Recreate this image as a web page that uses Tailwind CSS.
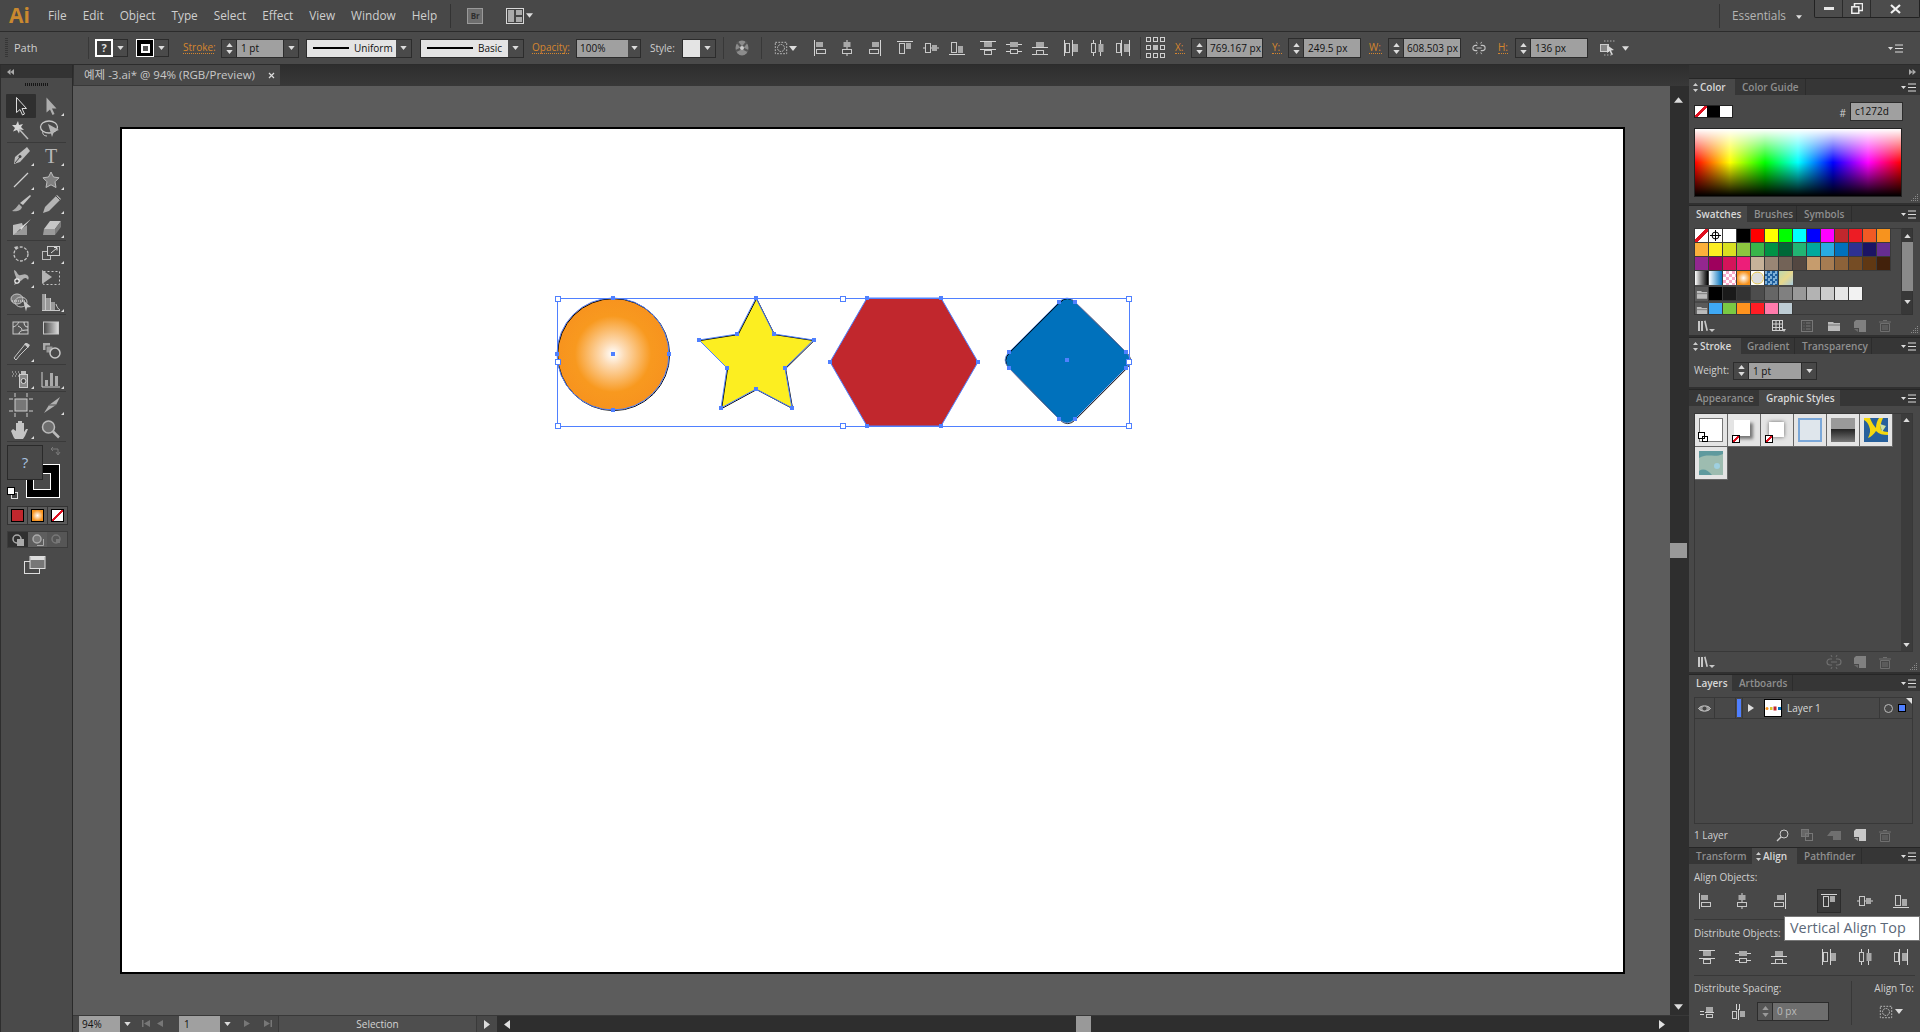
<!DOCTYPE html>
<html lang="ko">
<head>
<meta charset="UTF-8">
<title>Adobe Illustrator</title>
<script src="https://cdn.jsdelivr.net/npm/@tailwindcss/browser@4"></script>
</head>
<body class="w-[1920px] h-[1032px] overflow-hidden bg-[#2e2e2e] font-['Open_Sans','Noto_Sans_CJK_KR',sans-serif] text-[10px] text-[#d0d0d0]">

<!-- shared icons -->
<svg class="hidden">
  <symbol id="dd" viewBox="0 0 8 5"><path d="M0 0h8L4 5z" fill="#dcdcdc"/></symbol>
  <symbol id="up" viewBox="0 0 8 5"><path d="M0 5h8L4 0z" fill="#dcdcdc"/></symbol>
  <symbol id="menu" viewBox="0 0 15 9"><path d="M0 3h5L2.500 6z" fill="#ddd"/><path d="M7 1h8M7 4.500h8M7 8h8" stroke="#ddd"/></symbol>
  <symbol id="grip" viewBox="0 0 8 8"><path d="M7 1h1v1H7zM5 3h1v1H5zM7 3h1v1H7zM3 5h1v1H3zM5 5h1v1H5zM7 5h1v1H7zM1 7h1v1H1zM3 7h1v1H3zM5 7h1v1H5zM7 7h1v1H7z" fill="#8a8a8a"/></symbol>
  <symbol id="a-l" viewBox="0 0 16 16"><path d="M1.500 0v16" stroke="#d4d4d4"/><rect x="3" y="2" width="7" height="5" fill="#a8a8a8"/><rect x="3.500" y="9.500" width="9" height="4" fill="none" stroke="#c8c8c8"/></symbol>
  <symbol id="a-hc" viewBox="0 0 16 16"><path d="M8 0v16" stroke="#d4d4d4"/><rect x="4.500" y="2" width="7" height="5" fill="#a8a8a8"/><rect x="3.500" y="9.500" width="9" height="4" fill="#484848" stroke="#c8c8c8"/></symbol>
  <symbol id="a-r" viewBox="0 0 16 16"><path d="M14.500 0v16" stroke="#d4d4d4"/><rect x="6" y="2" width="7" height="5" fill="#a8a8a8"/><rect x="3.500" y="9.500" width="9" height="4" fill="none" stroke="#c8c8c8"/></symbol>
  <symbol id="a-t" viewBox="0 0 16 16"><path d="M0 1.500h16" stroke="#d4d4d4"/><rect x="2.500" y="3.500" width="5" height="10" fill="none" stroke="#c8c8c8"/><rect x="9" y="3" width="5" height="6" fill="#a8a8a8"/></symbol>
  <symbol id="a-vc" viewBox="0 0 16 16"><path d="M0 8h16" stroke="#d4d4d4"/><rect x="2.500" y="3.500" width="5" height="9" fill="#484848" stroke="#c8c8c8"/><rect x="9" y="5" width="5" height="6" fill="#a8a8a8"/></symbol>
  <symbol id="a-b" viewBox="0 0 16 16"><path d="M0 14.500h16" stroke="#d4d4d4"/><rect x="2.500" y="2.500" width="5" height="10" fill="none" stroke="#c8c8c8"/><rect x="9" y="6" width="5" height="7" fill="#a8a8a8"/></symbol>
  <symbol id="d-t" viewBox="0 0 16 16"><path d="M0 1.500h16M0 9.500h16" stroke="#d4d4d4"/><rect x="4" y="2" width="8" height="5" fill="#a8a8a8"/><rect x="4.500" y="10.500" width="7" height="4" fill="none" stroke="#c8c8c8"/></symbol>
  <symbol id="d-vc" viewBox="0 0 16 16"><path d="M0 4.500h16M0 11.500h16" stroke="#d4d4d4"/><rect x="4" y="2" width="8" height="5" fill="#a8a8a8"/><rect x="4.500" y="9.500" width="7" height="4" fill="#484848" stroke="#c8c8c8"/></symbol>
  <symbol id="d-b" viewBox="0 0 16 16"><path d="M0 7.500h16M0 14.500h16" stroke="#d4d4d4"/><rect x="4" y="2" width="8" height="5" fill="#a8a8a8"/><rect x="4.500" y="10.500" width="7" height="4" fill="none" stroke="#c8c8c8"/></symbol>
  <symbol id="d-l" viewBox="0 0 16 16"><path d="M1.500 0v16M9.500 0v16" stroke="#d4d4d4"/><rect x="2.500" y="3.500" width="4" height="9" fill="none" stroke="#c8c8c8"/><rect x="10" y="4" width="5" height="8" fill="#a8a8a8"/></symbol>
  <symbol id="d-hc" viewBox="0 0 16 16"><path d="M4.500 0v16M11.500 0v16" stroke="#d4d4d4"/><rect x="2.500" y="3.500" width="4" height="9" fill="#484848" stroke="#c8c8c8"/><rect x="9.500" y="4" width="5" height="8" fill="#a8a8a8"/></symbol>
  <symbol id="d-r" viewBox="0 0 16 16"><path d="M6.500 0v16M14.500 0v16" stroke="#d4d4d4"/><rect x="1.500" y="3.500" width="4" height="9" fill="none" stroke="#c8c8c8"/><rect x="9" y="4" width="5" height="8" fill="#a8a8a8"/></symbol>
  <symbol id="s-v" viewBox="0 0 16 16"><path d="M1 7.500h4M1 10.500h4" stroke="#d4d4d4"/><rect x="7" y="3" width="7" height="5" fill="#a8a8a8"/><path d="M6 8.500h9" stroke="#d4d4d4"/><rect x="7.500" y="10.500" width="6" height="3" fill="none" stroke="#c8c8c8"/></symbol>
  <symbol id="s-h" viewBox="0 0 16 16"><path d="M6.500 0v6M9.500 0v6" stroke="#d4d4d4"/><rect x="2.500" y="7.500" width="4" height="7" fill="none" stroke="#c8c8c8"/><path d="M8.500 5v11" stroke="#d4d4d4"/><rect x="10" y="7" width="5" height="6" fill="#a8a8a8"/></symbol>
  <symbol id="sel" viewBox="0 0 16 16"><rect x="1.500" y="1.500" width="13" height="13" fill="none" stroke="#c8c8c8" stroke-dasharray="2 1.500"/><circle cx="8" cy="8" r="4" fill="none" stroke="#c8c8c8" stroke-dasharray="2 1"/></symbol>
  <symbol id="lib" viewBox="0 0 18 12"><path d="M1 1h2v10H1zM4 1h2v10H4z" fill="#c8c8c8"/><path d="M7 1l1.600-.4L11 10.600l-1.600.4z" fill="#c8c8c8"/><path d="M12 9h6l-3 3z" fill="#c8c8c8"/></symbol>
  <symbol id="list" viewBox="0 0 12 12"><rect x=".5" y=".5" width="11" height="11" fill="none" stroke="#777"/><path d="M2.500 3h1M5 3h4.500M2.500 6h1M5 6h4.500M2.500 9h1M5 9h4.500" stroke="#777"/></symbol>
  <symbol id="folder" viewBox="0 0 14 12"><path d="M1 2h5l1 1h6v8H1z" fill="#bbb"/><path d="M1 5h12" stroke="#777"/></symbol>
  <symbol id="new" viewBox="0 0 12 12"><path d="M2 0h10v12H5V8H0V2z" fill="currentColor"/><path d="M0 9h4v3z" fill="currentColor" opacity=".6"/></symbol>
  <symbol id="trash" viewBox="0 0 12 13"><path d="M4 1.500h4M0 3h12M1.500 4.500h9V12.500h-9zM4 6v5M6 6v5M8 6v5" fill="none" stroke="#6f6f6f"/></symbol>
  <symbol id="link" viewBox="0 0 16 14"><path d="M6 4H4a3 3 0 0 0 0 6h2M10 4h2a3 3 0 0 1 0 6h-2M5 7h6" fill="none" stroke="currentColor" stroke-width="1.200"/><path d="M5 0l1 2M11 0l-1 2M5 14l1-2M11 14l-1-2" stroke="currentColor"/></symbol>
</svg>

<!-- menu bar -->
<div class="flex items-center h-8 bg-[#484848] border-b border-[#2c2c2c] text-[11.8px] leading-none text-[#cfcfcf]">
  <span class="w-[48px] pl-[9px] text-[21px] font-bold text-[#c9892f]">Ai</span>
  <nav class="flex gap-[16px]">
    <span>File</span><span>Edit</span><span>Object</span><span>Type</span><span>Select</span><span>Effect</span><span>View</span><span>Window</span><span>Help</span>
  </nav>
  <div class="ml-[13px] w-px h-[24px] bg-[#333]"></div>
  <div class="ml-[16px] w-[16px] h-[16px] flex items-center justify-center bg-[#6e6e6e] border border-[#9a9a9a] text-[8px] font-bold text-[#2e2e2e]">Br</div>
  <svg class="ml-[23px]" width="18" height="16" viewBox="0 0 18 16"><rect x=".5" y=".5" width="17" height="15" fill="#444" stroke="#d8d8d8"/><rect x="2" y="2" width="6" height="12" fill="#aaa"/><rect x="10" y="2" width="6" height="5" fill="#aaa"/><rect x="10" y="9" width="6" height="5" fill="#aaa"/></svg>
  <svg class="ml-[2px]" width="7" height="5"><use href="#dd"/></svg>
  <div class="ml-auto w-px h-[24px] bg-[#333]"></div>
  <span class="ml-[12px] text-[#b5b5b5]">Essentials</span>
  <svg class="ml-[10px] mt-[3px]" width="6" height="4"><use href="#dd"/></svg>
  <div class="ml-[12px] self-start flex h-[18px] w-[106px] bg-[#4c4c4c] border-x border-b border-[#222] rounded-b-[2px]">
    <div class="w-[28px] border-r border-[#2b2b2b] flex items-center justify-center"><div class="w-[10px] h-[3px] bg-[#e8e8e8]"></div></div>
    <div class="w-[28px] border-r border-[#2b2b2b] flex items-center justify-center"><svg width="12" height="11"><rect x="3.500" y=".5" width="8" height="7" fill="none" stroke="#eee" stroke-width="1.500"/><rect x=".8" y="3.800" width="7" height="6.500" fill="#4c4c4c" stroke="#eee" stroke-width="1.500"/></svg></div>
    <div class="flex-1 flex items-center justify-center"><svg width="11" height="10"><path d="M1 1l9 8M10 1l-9 8" stroke="#f0f0f0" stroke-width="2.200"/></svg></div>
  </div>
</div>

<!-- control bar -->
<div class="flex items-center h-[33px] bg-[#4a4a4a] border-b border-[#2c2c2c] text-[#cfcfcf]">
  <svg class="ml-[5px]" width="3" height="20" viewBox="0 0 3 20"><path d="M0 0v20M2 0v20" stroke="#222" stroke-dasharray="1 1"/></svg>
  <span class="ml-[6px] w-[74px] text-[11px]">Path</span>
  <div class="w-px h-[22px] bg-[#383838]"></div>

  <div class="ml-[6px] w-[18px] h-[18px] flex items-center justify-center border-2 border-white bg-[#3c3c3c] text-[11px] font-bold text-[#ddd]">?</div>
  <div class="w-[15px] h-[18px] flex items-center justify-center border-y border-r border-[#2c2c2c]"><svg width="7" height="4"><use href="#dd"/></svg></div>
  <div class="ml-[8px] w-[18px] h-[18px] flex items-center justify-center bg-black border border-white"><div class="w-[9px] h-[9px] border-2 border-white bg-[#555]"></div></div>
  <div class="w-[15px] h-[18px] flex items-center justify-center border-y border-r border-[#2c2c2c]"><svg width="7" height="4"><use href="#dd"/></svg></div>

  <span class="ml-[14px] w-[31px] leading-[11px] text-[#d6862e] border-b border-dotted border-[#d6862e]">Stroke:</span>

  <div class="ml-[7px] flex h-[19px] border border-[#2c2c2c]">
    <div class="w-[15px] flex flex-col items-center justify-center gap-[3px] border-r border-[#2c2c2c]"><svg width="7" height="4"><use href="#up"/></svg><svg width="7" height="4"><use href="#dd"/></svg></div>
    <div class="w-[46px] pl-[4px] bg-[#a0a0a0] text-[#111] leading-[17px]">1 pt</div>
    <div class="w-[15px] flex items-center justify-center border-l border-[#2c2c2c]"><svg width="7" height="4"><use href="#dd"/></svg></div>
  </div>

  <div class="ml-[7px] flex h-[19px] border border-[#2c2c2c]">
    <div class="w-[89px] flex items-center bg-[#e4e4e4] text-[#111] pl-[6px] gap-[5px]"><div class="w-[36px] h-[2px] bg-black"></div>Uniform</div>
    <div class="w-[15px] flex items-center justify-center"><svg width="7" height="4"><use href="#dd"/></svg></div>
  </div>
  <div class="ml-[8px] flex h-[19px] border border-[#2c2c2c]">
    <div class="w-[87px] flex items-center bg-[#e4e4e4] text-[#111] pl-[6px] gap-[5px]"><div class="w-[46px] h-[2px] bg-black"></div>Basic</div>
    <div class="w-[15px] flex items-center justify-center"><svg width="7" height="4"><use href="#dd"/></svg></div>
  </div>

  <span class="ml-[8px] w-[37px] leading-[11px] text-[#d6862e] border-b border-dotted border-[#d6862e]">Opacity:</span>
  <div class="ml-[7px] flex h-[19px] border border-[#2c2c2c]">
    <div class="w-[51px] pl-[3px] bg-[#a0a0a0] text-[#111] leading-[17px]">100%</div>
    <div class="w-[12px] flex items-center justify-center"><svg width="7" height="4"><use href="#dd"/></svg></div>
  </div>

  <span class="ml-[9px] w-[24px]">Style:</span>
  <div class="ml-[8px] flex h-[19px] border border-[#2c2c2c]">
    <div class="w-[17px] bg-[#e4e4e4]"></div>
    <div class="w-[15px] flex items-center justify-center"><svg width="7" height="4"><use href="#dd"/></svg></div>
  </div>
  <div class="ml-[7px] w-px h-[22px] bg-[#383838]"></div>
  <svg class="ml-[11px]" width="14" height="16" viewBox="0 0 14 16"><ellipse cx="7" cy="8" rx="6.500" ry="7.500" fill="#8c8c8c"/><path d="M7 8L2 2M7 8l5-6M7 8l-6 3M7 8l6 3" stroke="#555" stroke-width="2"/><circle cx="7" cy="8" r="2" fill="#ccc"/></svg>
  <div class="ml-[12px] w-px h-[22px] bg-[#383838]"></div>
  <svg class="ml-[12px]" width="14" height="16"><use href="#sel"/></svg>
  <svg class="ml-[1px]" width="8" height="5"><use href="#dd"/></svg>

  <svg class="ml-[16px]" width="16" height="16"><use href="#a-l"/></svg>
  <svg class="ml-[10px]" width="16" height="16"><use href="#a-hc"/></svg>
  <svg class="ml-[11px]" width="16" height="16"><use href="#a-r"/></svg>
  <svg class="ml-[15px]" width="16" height="16"><use href="#a-t"/></svg>
  <svg class="ml-[10px]" width="16" height="16"><use href="#a-vc"/></svg>
  <svg class="ml-[10px]" width="16" height="16"><use href="#a-b"/></svg>
  <svg class="ml-[15px]" width="16" height="16"><use href="#d-t"/></svg>
  <svg class="ml-[10px]" width="16" height="16"><use href="#d-vc"/></svg>
  <svg class="ml-[10px]" width="16" height="16"><use href="#d-b"/></svg>
  <svg class="ml-[15px]" width="16" height="16"><use href="#d-l"/></svg>
  <svg class="ml-[10px]" width="16" height="16"><use href="#d-hc"/></svg>
  <svg class="ml-[10px]" width="16" height="16"><use href="#d-r"/></svg>

  <div class="ml-[9px] w-px h-[22px] bg-[#383838]"></div>
  <svg class="ml-[5px]" width="19" height="22" viewBox="0 0 19 22"><g fill="none" stroke="#d0d0d0"><rect x=".5" y=".5" width="4" height="4"/><rect x="7.500" y=".5" width="4" height="4"/><rect x="14.500" y=".5" width="4" height="4"/><rect x=".5" y="8.500" width="4" height="4"/><rect x="14.500" y="8.500" width="4" height="4"/><rect x=".5" y="16.500" width="4" height="4"/><rect x="7.500" y="16.500" width="4" height="4"/><rect x="14.500" y="16.500" width="4" height="4"/></g><rect x="7" y="8" width="5" height="5" fill="#bbb"/></svg>

  <span class="ml-[10px] w-[10px] leading-[11px] text-[#d6862e] border-b border-dotted border-[#d6862e]">X:</span>
  <div class="ml-[6px] flex h-[20px] border border-[#2c2c2c]">
    <div class="w-[15px] flex flex-col items-center justify-center gap-[3px] border-r border-[#2c2c2c]"><svg width="7" height="4"><use href="#up"/></svg><svg width="7" height="4"><use href="#dd"/></svg></div>
    <div class="w-[55px] pl-[3px] bg-[#a0a0a0] text-[#111] leading-[18px]">769.167 px</div>
  </div>
  <span class="ml-[9px] w-[10px] leading-[11px] text-[#d6862e] border-b border-dotted border-[#d6862e]">Y:</span>
  <div class="ml-[6px] flex h-[20px] border border-[#2c2c2c]">
    <div class="w-[15px] flex flex-col items-center justify-center gap-[3px] border-r border-[#2c2c2c]"><svg width="7" height="4"><use href="#up"/></svg><svg width="7" height="4"><use href="#dd"/></svg></div>
    <div class="w-[56px] pl-[4px] bg-[#a0a0a0] text-[#111] leading-[18px]">249.5 px</div>
  </div>
  <span class="ml-[8px] w-[13px] leading-[11px] text-[#d6862e] border-b border-dotted border-[#d6862e]">W:</span>
  <div class="ml-[6px] flex h-[20px] border border-[#2c2c2c]">
    <div class="w-[15px] flex flex-col items-center justify-center gap-[3px] border-r border-[#2c2c2c]"><svg width="7" height="4"><use href="#up"/></svg><svg width="7" height="4"><use href="#dd"/></svg></div>
    <div class="w-[56px] pl-[3px] bg-[#a0a0a0] text-[#111] leading-[18px]">608.503 px</div>
  </div>
  <svg class="ml-[11px] text-[#c4c4c4]" width="14" height="14"><use href="#link"/></svg>
  <span class="ml-[12px] w-[10px] leading-[11px] text-[#d6862e] border-b border-dotted border-[#d6862e]">H:</span>
  <div class="ml-[7px] flex h-[20px] border border-[#2c2c2c]">
    <div class="w-[15px] flex flex-col items-center justify-center gap-[3px] border-r border-[#2c2c2c]"><svg width="7" height="4"><use href="#up"/></svg><svg width="7" height="4"><use href="#dd"/></svg></div>
    <div class="w-[56px] pl-[4px] bg-[#a0a0a0] text-[#111] leading-[18px]">136 px</div>
  </div>
  <svg class="ml-[11px]" width="17" height="16" viewBox="0 0 17 16"><rect x="1.500" y="4.500" width="8" height="7" fill="#888" stroke="#ccc"/><path d="M5 1h11M5 15h8" stroke="#aaa" stroke-dasharray="1.500 1.500"/><path d="M8 5l7 5-3 .5 2 4-1.500.5-2-4-2.500 2z" fill="#d8d8d8"/></svg>
  <svg class="ml-[6px]" width="7" height="5"><use href="#dd"/></svg>
  <svg class="ml-auto mr-[17px]" width="15" height="9"><use href="#menu"/></svg>
</div>

<!-- workspace -->
<div class="flex h-[967px]">

  <!-- tools -->
  <aside class="w-[73px] flex-none border-r border-[#2a2a2a] pl-px">
    <div class="flex items-center h-[13px] bg-[#333] pl-[6px]">
      <svg width="7" height="6" viewBox="0 0 7 6"><path d="M3.500 0v6L0 3zM7 0v6L3.500 3z" fill="#aaa"/></svg>
    </div>
    <div class="h-[954px] bg-[#4a4a4a]">
      <div class="flex justify-center pt-[5px] mb-[8px]"><svg class="block" width="24" height="3" viewBox="0 0 24 3"><path d="M0 1.500h24" stroke="#161616" stroke-width="3" stroke-dasharray="1 1"/></svg></div>

      <div class="flex h-6 pl-[5px]">
        <svg class="bg-[#2f2f2f] rounded-[1px]" width="30" height="24" viewBox="0 0 30 24"><path d="M10.500 3.500v15l3.500-3 2.500 5.500 2-1-2.500-5.500h4.500z" fill="none" stroke="#ddd"/></svg>
        <svg width="30" height="24" viewBox="0 0 30 24"><path d="M10.500 3.500v15l3.500-3 2.500 5.500 2-1-2.500-5.500h4.500z" fill="#aeaeae"/><path d="M28 19v3h-3z" fill="#ddd"/></svg>
      </div>
      <div class="flex h-6 pl-[5px]">
        <svg width="30" height="24" viewBox="0 0 30 24"><path d="M12 3l1 4 4-1-2 3 3 3-4-.5-1 4-2-3.500-4 1.500 2-3.500-3-3h4z" fill="#d6d6d6"/><path d="M13 11l9 10" stroke="#bbb" stroke-width="1.500"/></svg>
        <svg width="30" height="24" viewBox="0 0 30 24"><ellipse cx="13" cy="9" rx="8.500" ry="6" fill="none" stroke="#c8c8c8" stroke-width="1.300"/><path d="M7 13c-1 3 1 5 4 5" fill="none" stroke="#c8c8c8"/><path d="M12 6l11 6-5 1.500-2 5.500z" fill="#b4b4b4"/></svg>
      </div>
      <div class="h-px bg-[#3a3a3a] mx-[6px] mb-px"></div>

      <div class="flex h-6 pl-[5px]">
        <svg width="30" height="24" viewBox="0 0 30 24"><path d="M21 3l3 4-10 11-6 2 1-7z" fill="#bdbdbd"/><path d="M9 19l5-6" stroke="#444"/><circle cx="14" cy="12.500" r="1.500" fill="#444"/><path d="M28 19v3h-3z" fill="#ddd"/></svg>
        <svg width="30" height="24" viewBox="0 0 30 24"><text x="15" y="19" text-anchor="middle" font-family="Liberation Serif, serif" font-size="20" fill="#b8b8b8">T</text><path d="M28 19v3h-3z" fill="#ddd"/></svg>
      </div>
      <div class="flex h-6 pl-[5px]">
        <svg width="30" height="24" viewBox="0 0 30 24"><path d="M8 19L22 5" stroke="#d0d0d0" stroke-width="1.200"/><path d="M28 19v3h-3z" fill="#ddd"/></svg>
        <svg width="30" height="24" viewBox="0 0 30 24"><path d="M15 4l2.500 5 5.500.8-4 4 1 5.700-5-2.700-5 2.700 1-5.700-4-4 5.500-.8z" fill="#808080" stroke="#bdbdbd"/><path d="M28 19v3h-3z" fill="#ddd"/></svg>
      </div>
      <div class="flex h-6 pl-[5px]">
        <svg width="30" height="24" viewBox="0 0 30 24"><path d="M24 3l1 1-8 9-3-2z" fill="#c4c4c4"/><path d="M13 12c-2 3-4 5-7 7 4 1 9 0 10-4z" fill="#aaa"/><path d="M28 19v3h-3z" fill="#ddd"/></svg>
        <svg width="30" height="24" viewBox="0 0 30 24"><path d="M21 3l4 4-12 12-6 2 2-6z" fill="#b4b4b4"/><path d="M20 4l4 4" stroke="#4a4a4a"/><path d="M28 19v3h-3z" fill="#ddd"/></svg>
      </div>
      <div class="flex h-6 pl-[5px]">
        <svg width="30" height="24" viewBox="0 0 30 24"><path d="M7 9l9-2 1 3-6 6 3 3H7z" fill="#bdbdbd"/><path d="M7 19h14V9z" fill="#999"/><path d="M25 3L14 12l1 2z" fill="#ddd"/></svg>
        <svg width="30" height="24" viewBox="0 0 30 24"><path d="M14 5h11l-6 8H8z" fill="#c6c6c6"/><path d="M8 13h11v6H7z" fill="#9a9a9a"/><path d="M19 13l6-8v6l-6 8z" fill="#7c7c7c"/><path d="M28 19v3h-3z" fill="#ddd"/></svg>
      </div>
      <div class="h-px bg-[#3a3a3a] mx-[6px] mb-px"></div>

      <div class="flex h-6 pl-[5px]">
        <svg width="30" height="24" viewBox="0 0 30 24"><circle cx="15" cy="12" r="7" fill="none" stroke="#c4c4c4" stroke-width="1.300" stroke-dasharray="3 1.500"/><path d="M8 5l4-1-2 4z" fill="#c4c4c4"/><path d="M28 19v3h-3z" fill="#ddd"/></svg>
        <svg width="30" height="24" viewBox="0 0 30 24"><rect x="6.500" y="9.500" width="8" height="8" fill="none" stroke="#bbb"/><rect x="11.500" y="4.500" width="12" height="9" fill="#4a4a4a" stroke="#ccc"/><path d="M15 11l6-5M18 5.500h3v3" fill="none" stroke="#ddd"/><path d="M28 19v3h-3z" fill="#ddd"/></svg>
      </div>
      <div class="flex h-6 pl-[5px]">
        <svg width="30" height="24" viewBox="0 0 30 24"><path d="M8 4c3 1 3 4 5 5s5-2 8 0 1 5 1 5c-2-3-4-2-6 0l-4 3-4 2 2-5c1-3-2-6-2-10z" fill="#b0b0b0"/><circle cx="11" cy="15" r="2.200" fill="#4a4a4a" stroke="#eee" stroke-width="1.200"/><path d="M28 19v3h-3z" fill="#ddd"/></svg>
        <svg width="30" height="24" viewBox="0 0 30 24"><rect x="7.500" y="5.500" width="16" height="13" fill="none" stroke="#c4c4c4" stroke-dasharray="2 2"/><path d="M6 4l10 7-10 7z" fill="#b4b4b4"/></svg>
      </div>
      <div class="flex h-6 pl-[5px]">
        <svg width="30" height="24" viewBox="0 0 30 24"><ellipse cx="11" cy="9" rx="6" ry="5" fill="#7c7c7c" stroke="#c4c4c4"/><ellipse cx="15" cy="12" rx="6" ry="5" fill="none" stroke="#c4c4c4"/><path d="M6 11h13" stroke="#eee" stroke-dasharray="1 1"/><path d="M17 10l8 7-4 .5-1 4z" fill="#c8c8c8"/></svg>
        <svg width="30" height="24" viewBox="0 0 30 24"><path d="M6 4h3v16H6zM10 8h4v12h-4zM15 12h4v8h-4z" fill="#9a9a9a"/><path d="M6 20.500h18M9.500 4v16M14.500 8v12M20 14c1 3 2 5 4 6" fill="none" stroke="#c8c8c8"/><path d="M28 19v3h-3z" fill="#ddd"/></svg>
      </div>
      <div class="h-px bg-[#3a3a3a] mx-[6px] mb-px"></div>

      <div class="flex h-6 pl-[5px]">
        <svg width="30" height="24" viewBox="0 0 30 24"><rect x="7" y="6" width="15" height="12" fill="#555" stroke="#c8c8c8"/><path d="M7 11c4-1 5-4 6-5M13 18c0-3 3-4 9-4M12 10c2 1 4 2 4 4M18 6c0 3 1 5 4 5" fill="none" stroke="#d8d8d8"/></svg>
        <svg width="30" height="24" viewBox="0 0 30 24"><defs><linearGradient id="gt"><stop offset="0" stop-color="#444"/><stop offset="1" stop-color="#ddd"/></linearGradient></defs><rect x="7.500" y="6" width="15" height="12" fill="url(#gt)" stroke="#c8c8c8"/></svg>
      </div>
      <div class="flex h-6 pl-[5px]">
        <svg width="30" height="24" viewBox="0 0 30 24"><path d="M20 3l3 3-9 9-4 5-2-2 4-5z" fill="#4a4a4a" stroke="#c8c8c8"/><path d="M18 4l4 4 2-3-3-2z" fill="#c8c8c8"/><path d="M28 19v3h-3z" fill="#ddd"/></svg>
        <svg width="30" height="24" viewBox="0 0 30 24"><rect x="7" y="3" width="7" height="7" fill="#aaa"/><rect x="10" y="6" width="7" height="7" fill="#999" stroke="#4a4a4a"/><circle cx="19" cy="13" r="5" fill="#4a4a4a" stroke="#c8c8c8" stroke-width="1.500"/></svg>
      </div>
      <div class="h-px bg-[#3a3a3a] mx-[6px] mb-[2px]"></div>

      <div class="flex h-6 pl-[5px]">
        <svg width="30" height="24" viewBox="0 0 30 24"><path d="M6 5h1M9 5h1M12 5h1M7 7h1M10 7h1M13 7h1M6 9h1M9 9h1M12 9h1" stroke="#ccc"/><rect x="15" y="4" width="5" height="3" fill="#bbb"/><rect x="13.500" y="7.500" width="8" height="13" fill="#888" stroke="#ccc"/><circle cx="17.500" cy="14" r="2.500" fill="#444" stroke="#ddd"/><path d="M28 19v3h-3z" fill="#ddd"/></svg>
        <svg width="30" height="24" viewBox="0 0 30 24"><path d="M6 5v15h18" fill="none" stroke="#d0d0d0"/><rect x="9" y="13" width="3" height="6" fill="#aaa"/><rect x="14" y="6" width="3" height="13" fill="#aaa"/><rect x="19" y="9" width="3" height="10" fill="#aaa"/><path d="M28 19v3h-3z" fill="#ddd"/></svg>
      </div>
      <div class="h-px bg-[#3a3a3a] mx-[6px] mb-[1px]"></div>

      <div class="flex h-6 pl-[5px]">
        <svg width="30" height="24" viewBox="0 0 30 24"><rect x="9" y="6" width="12" height="12" fill="#777" stroke="#ccc"/><path d="M3 6h4M23 6h4M3 18h4M23 18h4M9 0v4M21 0v4M9 20v4M21 20v4" stroke="#ccc"/></svg>
        <svg width="30" height="24" viewBox="0 0 30 24"><path d="M24 4l-4 8-12 8 5-8z" fill="#b0b0b0"/><path d="M13 12l7 0" stroke="#4a4a4a"/><path d="M28 19v3h-3z" fill="#ddd"/></svg>
      </div>
      <div class="flex h-6 pl-[5px]">
        <svg width="30" height="24" viewBox="0 0 30 24"><path d="M7 12l3 2V6h2v6-8h2v8-8h2v8-6h2v9l2-3h2l-3 7-2 3h-8c-2-2-2-4-4-8z" fill="#c4c4c4"/><path d="M28 19v3h-3z" fill="#ddd"/></svg>
        <svg width="30" height="24" viewBox="0 0 30 24"><circle cx="12.500" cy="10" r="6" fill="#6e6e6e" stroke="#bbb" stroke-width="1.500"/><path d="M17 14.500l6 6" stroke="#bbb" stroke-width="2.500"/></svg>
      </div>
      <div class="h-px bg-[#3a3a3a] mx-[6px] mb-[3px]"></div>

      <!-- fill and stroke -->
      <div class="relative h-[54px]">
        <div class="absolute left-[25px] top-[19px] w-[34px] h-[34px] bg-black border border-white flex items-center justify-center"><div class="w-[18px] h-[17px] border border-white bg-[#4a4a4a] -translate-x-px"></div></div>
        <div class="absolute left-[6px] top-0 w-[36px] h-[35px] bg-[#484848] border border-[#2a2a2a] flex items-center justify-center text-[15px] text-[#a8c4e0]">?</div>
        <svg class="absolute left-[49px] top-[1px]" width="12" height="11" viewBox="0 0 12 11"><path d="M1 3h7v5M3 1L1 3l2 2M6 6l2 3 2-3" fill="none" stroke="#7a7a7a"/></svg>
        <div class="absolute left-[10px] top-[47px] w-[7px] h-[7px] bg-[#444] border border-[#ddd]"></div>
        <div class="absolute left-[6px] top-[42px] w-[8px] h-[8px] bg-white border border-black"></div>
      </div>
      <div class="ml-[6px] mt-[7px] flex w-[61px] h-[19px] border border-[#333]">
        <div class="flex-1 flex items-center justify-center bg-[#5a5a5a] border-r border-[#333]"><div class="w-[13px] h-[13px] bg-[#c1272d] border border-black"></div></div>
        <div class="flex-1 flex items-center justify-center bg-[#5a5a5a] border-r border-[#333]"><div class="w-[13px] h-[13px] border border-black bg-[radial-gradient(circle,#fff,#f7931e_70%)]"></div></div>
        <div class="flex-1 flex items-center justify-center bg-[#5a5a5a]"><div class="w-[13px] h-[13px] border border-black bg-[linear-gradient(135deg,#fff_42%,#e01020_42%,#e01020_58%,#fff_58%)]"></div></div>
      </div>
      <div class="ml-[6px] mt-[6px] flex w-[61px] h-[17px] border border-[#3c3c3c]">
        <div class="flex-1 flex items-center justify-center bg-[#303030]"><svg width="12" height="12"><circle cx="5" cy="5" r="4" fill="none" stroke="#aaa" stroke-width="1.500"/><rect x="5" y="5" width="7" height="7" fill="#aaa"/></svg></div>
        <div class="flex-1 flex items-center justify-center bg-[#5e5e5e]"><svg width="12" height="12"><circle cx="5" cy="5" r="4" fill="#777" stroke="#aaa" stroke-width="1.500"/><path d="M5 11.500h6.500V5" fill="none" stroke="#aaa"/></svg></div>
        <div class="flex-1 flex items-center justify-center bg-[#565656]"><svg width="12" height="12"><circle cx="5" cy="5" r="4" fill="none" stroke="#777" stroke-width="1.500"/><rect x="5" y="5" width="4" height="4" fill="#777"/></svg></div>
      </div>
      <svg class="ml-[23px] mt-[8px]" width="22" height="18" viewBox="0 0 22 18"><rect x=".5" y="5.500" width="15" height="12" fill="#4a4a4a" stroke="#ddd"/><rect x="6" y=".5" width="15" height="12" fill="#777" stroke="#ddd"/><rect x="6.500" y="1" width="14" height="3" fill="#ddd"/></svg>
    </div>
  </aside>

  <!-- document area -->
  <main class="flex-1 flex flex-col min-w-0">
    <div class="flex items-end h-[21px] bg-[linear-gradient(#2e2e2e,#383838)] border-b border-[#383838]">
      <div class="flex items-center w-[206px] h-[20px] ml-px pl-[10px] bg-[#484848] text-[#c8c8c8]">
        <span class="w-[184px] text-[11.500px] whitespace-nowrap">예제 -3.ai* @ 94% (RGB/Preview)</span>
        <svg width="7" height="7"><path d="M1 1l5 5M6 1L1 6" stroke="#ddd" stroke-width="1.200"/></svg>
      </div>
    </div>

    <div class="flex h-[929px]">
      <div class="flex-1 bg-[#5c5c5c] pl-[47px] pt-[41px]">
        <!-- artboard: the svg uses page coordinates through its viewBox -->
        <div class="relative w-[1505px] h-[847px] bg-white border-2 border-black">
          <svg class="absolute left-0 top-0 overflow-visible" width="1501" height="843" viewBox="122 129 1501 843">
            <defs><radialGradient id="orange"><stop offset="0" stop-color="#fff"/><stop offset=".2" stop-color="#fddcb6"/><stop offset=".68" stop-color="#f8991f"/><stop offset="1" stop-color="#f7931e"/></radialGradient></defs>

            <circle cx="613" cy="354" r="56" fill="url(#orange)"/>
            <path d="M756 298L774 334 813.500 340 785 368 792 408 756 389 721 408 727 368 699 340 737.500 334Z" fill="#fcee21"/>
            <path d="M867 298H941L978 362 941 426H867L830 362Z" fill="#c1272d"/>
            <path d="M1059 302Q1067 294 1075 302L1126 352Q1134 360 1126 368L1075 419Q1067 427 1059 419L1009 368Q1001 360 1009 352Z" fill="#0071bc"/>

            <g fill="none" stroke="#000" transform="translate(.6 .6)">
              <circle cx="613" cy="354" r="56"/>
              <path d="M756 298L774 334 813.500 340 785 368 792 408 756 389 721 408 727 368 699 340 737.500 334Z"/>
              <path d="M1059 302Q1067 294 1075 302L1126 352Q1134 360 1126 368L1075 419Q1067 427 1059 419L1009 368Q1001 360 1009 352Z"/>
            </g>
            <g fill="none" stroke="#4f80ff">
              <circle cx="613" cy="354" r="56"/>
              <path d="M756 298L774 334 813.500 340 785 368 792 408 756 389 721 408 727 368 699 340 737.500 334Z"/>
              <path d="M867 298H941L978 362 941 426H867L830 362Z"/>
              <path d="M1059 302Q1067 294 1075 302L1126 352Q1134 360 1126 368L1075 419Q1067 427 1059 419L1009 368Q1001 360 1009 352Z" stroke="#7f9fe8" stroke-width=".8"/>
              <rect x="557.500" y="298.500" width="572" height="128"/>
            </g>
            <!-- anchors -->
            <g fill="#4f80ff">
              <rect x="611" y="296" width="4" height="4"/><rect x="555" y="352" width="4" height="4"/><rect x="667" y="352" width="4" height="4"/><rect x="611" y="408" width="4" height="4"/><rect x="611" y="352" width="4" height="4"/>
              <rect x="754" y="296" width="4" height="4"/><rect x="772" y="332" width="4" height="4"/><rect x="812" y="338" width="4" height="4"/><rect x="783" y="366" width="4" height="4"/><rect x="790" y="406" width="4" height="4"/><rect x="754" y="387" width="4" height="4"/><rect x="719" y="406" width="4" height="4"/><rect x="725" y="366" width="4" height="4"/><rect x="697" y="338" width="4" height="4"/><rect x="735" y="332" width="4" height="4"/>
              <rect x="865" y="296" width="4" height="4"/><rect x="939" y="296" width="4" height="4"/><rect x="976" y="360" width="4" height="4"/><rect x="939" y="424" width="4" height="4"/><rect x="865" y="424" width="4" height="4"/><rect x="828" y="360" width="4" height="4"/>
              <rect x="1057" y="300" width="4" height="4"/><rect x="1073" y="300" width="4" height="4"/><rect x="1124" y="350" width="4" height="4"/><rect x="1124" y="366" width="4" height="4"/><rect x="1073" y="417" width="4" height="4"/><rect x="1057" y="417" width="4" height="4"/><rect x="1007" y="366" width="4" height="4"/><rect x="1007" y="350" width="4" height="4"/><rect x="1065" y="358" width="4" height="4"/>
            </g>
            <!-- bounding box handles -->
            <g fill="#fff" stroke="#4f80ff">
              <rect x="555.500" y="296.500" width="5" height="5"/><rect x="840.500" y="296.500" width="5" height="5"/><rect x="1126.500" y="296.500" width="5" height="5"/>
              <rect x="555.500" y="359.500" width="5" height="5"/><rect x="1126.500" y="359.500" width="5" height="5"/>
              <rect x="555.500" y="423.500" width="5" height="5"/><rect x="840.500" y="423.500" width="5" height="5"/><rect x="1126.500" y="423.500" width="5" height="5"/>
            </g>
          </svg>
        </div>
      </div>

      <!-- vertical scrollbar -->
      <div class="w-[19px] flex-none flex flex-col bg-[#2e2e2e] pr-[2px]">
        <div class="h-[11px] flex-none"></div>
        <svg class="ml-[4px] flex-none" width="9" height="6"><use href="#up"/></svg>
        <div class="h-[440px] flex-none"></div>
        <div class="h-[15px] flex-none bg-[#999]"></div>
        <div class="h-[446px] flex-none"></div>
        <svg class="ml-[4px] flex-none" width="9" height="6"><use href="#dd"/></svg>
      </div>
    </div>

    <!-- status bar -->
    <div class="flex h-[17px] bg-[#484848] border-t border-[#383838]">
      <div class="ml-[6px] w-[41px] pl-[3px] bg-[#a0a0a0] text-[#111] leading-[16px]">94%</div>
      <div class="w-[14px] flex items-center justify-center"><svg width="7" height="4"><use href="#dd"/></svg></div>
      <svg class="ml-[8px] mt-[3px]" width="32" height="9" viewBox="0 0 32 9"><path d="M0 1h1.500v7H0zM8 1v7L2 4.500zM21 1v7L15 4.500z" fill="#777"/></svg>
      <div class="ml-[5px] w-[41px] pl-[5px] bg-[#a0a0a0] text-[#111] leading-[16px]">1</div>
      <div class="w-[14px] flex items-center justify-center"><svg width="7" height="4"><use href="#dd"/></svg></div>
      <svg class="ml-[10px] mt-[3px]" width="28" height="9" viewBox="0 0 28 9"><path d="M0 1v7l6-3.500zM20 1v7l6-3.500zM26.500 1H28v7h-1.500z" fill="#777"/></svg>
      <div class="ml-[6px] w-[199px] bg-[#4e4e4e] border-x border-[#3a3a3a] text-center leading-[16px] text-[#d4d4d4]">Selection</div>
      <div class="w-[20px] flex items-center justify-center"><svg width="6" height="9" viewBox="0 0 6 9"><path d="M0 0l6 4.500L0 9z" fill="#ddd"/></svg></div>
      <div class="flex-1 flex items-center bg-[#2e2e2e] pl-[7px]">
        <svg width="6" height="9" viewBox="0 0 6 9"><path d="M6 0L0 4.500 6 9z" fill="#e0e0e0"/></svg>
        <div class="ml-[566px] w-[15px] h-full bg-[#999]"></div>
        <svg class="ml-[568px]" width="6" height="9" viewBox="0 0 6 9"><path d="M0 0l6 4.500L0 9z" fill="#e0e0e0"/></svg>
      </div>
    </div>
  </main>

  <!-- panels -->
  <aside class="relative w-[231px] flex-none bg-[#303030]">
    <div class="flex items-center justify-end h-[13px] pr-[4px] bg-[#333]"><svg width="7" height="6" viewBox="0 0 7 6"><path d="M0 0v6l3.500-3zM3.500 0v6L7 3z" fill="#aaa"/></svg></div>

    <!-- Color -->
    <div class="flex h-[17px] bg-[#363636] border-t border-[#262626] font-semibold">
      <div class="flex items-center w-[46px] pl-[4px] bg-[#484848] text-[#d8d8d8]"><svg class="mr-[2px]" width="5" height="9" viewBox="0 0 5 9"><path d="M2.500 0L5 3H0zM2.500 9L0 6h5z" fill="#ccc"/></svg>Color</div>
      <div class="flex items-center w-[71px] pl-[7px] text-[#8f8f8f] border-r border-[#2c2c2c]">Color Guide</div>
      <svg class="ml-auto mr-[4px] self-center" width="15" height="9"><use href="#menu"/></svg>
    </div>
    <div class="relative h-[108px] bg-[#484848] px-[5px] pt-[7px]">
      <div class="flex items-start h-[26px]">
        <div class="mt-[3px] flex w-[39px] h-[13px] border border-[#222]">
          <div class="flex-1 bg-[linear-gradient(135deg,#fff_42%,#e01020_42%,#e01020_58%,#fff_58%)]"></div>
          <div class="flex-1 bg-black"></div>
          <div class="flex-1 bg-white"></div>
        </div>
        <span class="ml-auto mr-[4px] mt-[4px]">#</span>
        <div class="w-[53px] h-[19px] mr-[12px] pl-[4px] bg-[#a0a0a0] border border-[#2c2c2c] text-[#111] leading-[17px]">c1272d</div>
      </div>
      <div class="w-[208px] h-[69px] border border-[#222] bg-[linear-gradient(#fff,transparent_50%,#000),linear-gradient(90deg,#f00,#ff0_17%,#0f0_34%,#0ff_50%,#00f_67%,#f0f_84%,#f00)]"></div>
      <svg class="absolute right-[2px] bottom-[2px]" width="8" height="8"><use href="#grip"/></svg>
    </div>
    <div class="h-[2px]"></div>

    <!-- Swatches -->
    <div class="flex h-[17px] bg-[#363636] border-t border-[#262626] font-semibold">
      <div class="flex items-center w-[58px] pl-[7px] bg-[#484848] text-[#d8d8d8]">Swatches</div>
      <div class="flex items-center w-[50px] pl-[7px] text-[#8f8f8f] border-r border-[#2c2c2c]">Brushes</div>
      <div class="flex items-center w-[55px] pl-[7px] text-[#8f8f8f] border-r border-[#2c2c2c]">Symbols</div>
      <svg class="ml-auto mr-[4px] self-center" width="15" height="9"><use href="#menu"/></svg>
    </div>
    <div class="relative h-[113px] bg-[#484848] pt-[6px] pl-[5px]">
      <div class="flex h-[87px]">
        <div class="w-[208px] h-[87px] overflow-hidden bg-[#484848] border border-[#383838]">
          <div class="flex h-[14px]" data-swatches="#fff #000 #f00 #ff0 #0f0 #0ff #00f #f0f #c1272d #ed1c24 #f15a24 #f7931e">
            <div class="w-[14px] h-[14px] border-r border-b border-[#3a3a3a] bg-[linear-gradient(135deg,#fff_42%,#e01020_42%,#e01020_58%,#fff_58%)]"></div>
            <div class="w-[14px] h-[14px] border-r border-b border-[#3a3a3a] bg-white flex items-center justify-center"><svg width="11" height="11"><circle cx="5.500" cy="5.500" r="3.500" fill="none" stroke="#000"/><path d="M5.500 0v11M0 5.500h11" stroke="#000"/></svg></div>
          </div>
          <div class="flex h-[14px]" data-swatches="#fbb03b #fcee21 #d9e021 #8cc63f #39b54a #009245 #006837 #22b573 #00a99d #29abe2 #0071bc #2e3192 #1b1464 #662d91"></div>
          <div class="flex h-[14px]" data-swatches="#93278f #9e005d #d4145a #ed1e79 #c7b299 #998675 #736357 #534741 #c69c6d #a67c52 #8c6239 #754c24 #603813 #42210b"></div>
          <div class="flex h-[14px]">
            <div class="w-[14px] h-[14px] border-r border-[#3a3a3a] bg-[linear-gradient(90deg,#fff,#000)]"></div>
            <div class="w-[14px] h-[14px] border-r border-[#3a3a3a] bg-[linear-gradient(90deg,#fff,#0071bc)]"></div>
            <div class="w-[14px] h-[14px] border-r border-[#3a3a3a] bg-[repeating-conic-gradient(#f9a8c8_0_25%,#fff_0_50%)] bg-[length:6px_6px]"></div>
            <div class="w-[14px] h-[14px] border-r border-[#3a3a3a] bg-[radial-gradient(circle,#fff,#f7931e_70%)]"></div>
            <div class="w-[14px] h-[14px] border-r border-[#3a3a3a] bg-[radial-gradient(circle,#ddd_55%,#e6c64c_60%,#fff_72%)]"></div>
            <div class="w-[14px] h-[14px] border-r border-[#3a3a3a] bg-[repeating-conic-gradient(#1f5f9e_0_25%,#7fb0d8_0_50%)] bg-[length:5px_5px]"></div>
            <div class="w-[14px] h-[14px] bg-[linear-gradient(135deg,#bcd8b0,#e8d88c,#a8cce0)]"></div>
          </div>
          <div class="flex h-[14px] mt-[2px]" data-swatches="#000 #1a1a1a #333 #4d4d4d #666 #808080 #999 #b3b3b3 #ccc #e6e6e6 #f2f2f2">
            <div class="w-[14px] h-[14px] flex items-center justify-center bg-[#5a5a5a] border-r border-[#3a3a3a]"><svg width="12" height="11"><use href="#folder"/></svg></div>
          </div>
          <div class="flex h-[14px] mt-[2px]" data-swatches="#3fa9f5 #7ac943 #ff931e #ff1d25 #ff7bac #bdccd4">
            <div class="w-[14px] h-[14px] flex items-center justify-center bg-[#5a5a5a] border-r border-[#3a3a3a]"><svg width="12" height="11"><use href="#folder"/></svg></div>
          </div>
        </div>
        <div class="w-[11px] flex flex-col items-center bg-[#383838] border border-l-0 border-[#333] pt-[5px]">
          <svg width="7" height="4"><use href="#up"/></svg>
          <div class="w-[11px] h-[49px] mt-[4px] bg-[#8a8a8a]"></div>
          <svg class="mt-[9px]" width="7" height="4"><use href="#dd"/></svg>
        </div>
      </div>
      <div class="flex items-center h-[19px] mt-px text-[#aaa]">
        <svg class="ml-[3px]" width="18" height="12"><use href="#lib"/></svg>
        <svg class="ml-[57px]" width="14" height="12" viewBox="0 0 14 12"><rect x=".5" y=".5" width="10" height="10" fill="none" stroke="#d0d0d0"/><path d="M4 0v11M7.500 0v11M0 4h11M0 7.500h11" stroke="#d0d0d0"/><path d="M10 9h4l-2 3z" fill="#ccc"/></svg>
        <svg class="ml-[15px]" width="12" height="12"><use href="#list"/></svg>
        <svg class="ml-[14px]" width="14" height="12"><use href="#folder"/></svg>
        <svg class="ml-[13px] text-[#808080]" width="12" height="12"><use href="#new"/></svg>
        <svg class="ml-[13px]" width="12" height="13"><use href="#trash"/></svg>
      </div>
      <svg class="absolute right-[2px] bottom-[2px]" width="8" height="8"><use href="#grip"/></svg>
    </div>
    <div class="h-[2px]"></div>

    <!-- Stroke -->
    <div class="flex h-[17px] bg-[#363636] border-t border-[#262626] font-semibold">
      <div class="flex items-center w-[52px] pl-[4px] bg-[#484848] text-[#d8d8d8]"><svg class="mr-[2px]" width="5" height="9" viewBox="0 0 5 9"><path d="M2.500 0L5 3H0zM2.500 9L0 6h5z" fill="#ccc"/></svg>Stroke</div>
      <div class="flex items-center w-[54px] pl-[6px] text-[#8f8f8f] border-r border-[#2c2c2c]">Gradient</div>
      <div class="flex items-center w-[77px] pl-[7px] text-[#8f8f8f] border-r border-[#2c2c2c]">Transparency</div>
      <svg class="ml-auto mr-[4px] self-center" width="15" height="9"><use href="#menu"/></svg>
    </div>
    <div class="flex items-center h-[33px] bg-[#484848] pl-[5px]">
      <span class="w-[39px]">Weight:</span>
      <div class="flex h-[18px] border border-[#2c2c2c]">
        <div class="w-[15px] flex flex-col items-center justify-center gap-[3px] border-r border-[#2c2c2c]"><svg width="7" height="4"><use href="#up"/></svg><svg width="7" height="4"><use href="#dd"/></svg></div>
        <div class="w-[52px] pl-[4px] bg-[#a0a0a0] text-[#111] leading-[16px]">1 pt</div>
        <div class="w-[15px] flex items-center justify-center border-l border-[#2c2c2c]"><svg width="7" height="4"><use href="#dd"/></svg></div>
      </div>
    </div>
    <div class="h-[2px]"></div>

    <!-- Graphic Styles -->
    <div class="flex h-[17px] bg-[#363636] border-t border-[#262626] font-semibold">
      <div class="flex items-center w-[70px] pl-[7px] text-[#8f8f8f]">Appearance</div>
      <div class="flex items-center w-[81px] pl-[7px] bg-[#484848] text-[#d8d8d8]">Graphic Styles</div>
      <svg class="ml-auto mr-[4px] self-center" width="15" height="9"><use href="#menu"/></svg>
    </div>
    <div class="h-[266px] bg-[#484848] pt-[7px] pl-[5px]">
      <div class="flex h-[239px] w-[219px] border border-[#383838]">
        <div class="w-[208px] flex flex-wrap content-start">
          <div class="relative w-[33px] h-[33px] bg-[#e4e4e4] border-r border-b border-[#666]"><div class="absolute left-[4px] top-[4px] w-[24px] h-[24px] bg-white border border-[#777]"></div><div class="absolute left-[3px] top-[18px] w-[7px] h-[7px] bg-white border border-black"></div><div class="absolute left-[7px] top-[22px] w-[6px] h-[6px] border border-black"></div></div>
          <div class="relative w-[33px] h-[33px] bg-[#e4e4e4] border-r border-b border-[#666]"><div class="absolute left-[6px] top-[6px] w-[16px] h-[16px] bg-white shadow-[3px_3px_3px_#777]"></div><div class="absolute left-[4px] top-[21px] w-[8px] h-[8px] border border-black bg-[linear-gradient(135deg,#fff_35%,#e01020_35%,#e01020_65%,#fff_65%)]"></div></div>
          <div class="relative w-[33px] h-[33px] bg-[#e4e4e4] border-r border-b border-[#666]"><div class="absolute left-[8px] top-[8px] w-[15px] h-[15px] bg-white shadow-[0_0_4px_#666]"></div><div class="absolute left-[4px] top-[21px] w-[8px] h-[8px] border border-black bg-[linear-gradient(135deg,#fff_35%,#e01020_35%,#e01020_65%,#fff_65%)]"></div></div>
          <div class="relative w-[33px] h-[33px] bg-[#e4e4e4] border-r border-b border-[#666]"><div class="absolute left-[4px] top-[4px] w-[24px] h-[24px] border-2 border-[#7aa7d8] bg-[#dfe6ec]"></div></div>
          <div class="relative w-[33px] h-[33px] bg-[#e4e4e4] border-r border-b border-[#666]"><div class="absolute left-[4px] top-[4px] w-[24px] h-[24px] bg-[linear-gradient(#9a9a9a_45%,#222_45%,#777)]"></div></div>
          <div class="relative w-[33px] h-[33px] bg-[#e4e4e4] border-r border-b border-[#666]"><svg class="absolute left-[4px] top-[4px]" width="24" height="24" viewBox="0 0 24 24"><rect width="24" height="24" fill="#27609c"/><path d="M0 0h6c2 5 4 8 6 10 0-4 1-7 3-10h4c-2 4-3 8-2 12 2 1 4 2 7 2v3c-5 0-9-1-12-4-2 3-5 6-8 7 2-4 3-8 1-12C4 5 2 3 0 2z" fill="#f5d80f"/><path d="M16 6l6 2-4 6z" fill="#cfe0a0"/></svg></div>
          <div class="relative w-[33px] h-[33px] bg-[#e4e4e4] border-r border-b border-[#666]"><svg class="absolute left-[4px] top-[4px]" width="24" height="24" viewBox="0 0 24 24"><rect width="24" height="24" fill="#9dbcb0"/><path d="M0 0h24v3C16 7 8 2 0 7zM0 24v-4c4-3 9-1 13 4z" fill="#5f9a9e"/><circle cx="18" cy="15" r="3" fill="#9fd0e0"/></svg></div>
        </div>
        <div class="w-[11px] flex flex-col items-center bg-[#3c3c3c] py-[4px]">
          <svg width="7" height="4"><use href="#up"/></svg>
          <svg class="mt-auto" width="7" height="4"><use href="#dd"/></svg>
        </div>
      </div>
      <div class="relative flex items-center h-[20px] text-[#aaa]">
        <svg class="ml-[3px]" width="18" height="12"><use href="#lib"/></svg>
        <svg class="ml-[111px] text-[#6f6f6f]" width="16" height="14"><use href="#link"/></svg>
        <svg class="ml-[12px] text-[#808080]" width="12" height="12"><use href="#new"/></svg>
        <svg class="ml-[13px]" width="12" height="13"><use href="#trash"/></svg>
        <svg class="absolute right-[3px] bottom-[2px]" width="8" height="8"><use href="#grip"/></svg>
      </div>
    </div>
    <div class="h-[2px]"></div>

    <!-- Layers -->
    <div class="flex h-[17px] bg-[#363636] border-t border-[#262626] font-semibold">
      <div class="flex items-center w-[43px] pl-[7px] bg-[#484848] text-[#d8d8d8]">Layers</div>
      <div class="flex items-center w-[61px] pl-[7px] text-[#8f8f8f] border-r border-[#2c2c2c]">Artboards</div>
      <svg class="ml-auto mr-[4px] self-center" width="15" height="9"><use href="#menu"/></svg>
    </div>
    <div class="h-[156px] bg-[#484848] pt-[6px] pl-[5px]">
      <div class="w-[219px] h-[127px] border border-[#383838]">
        <div class="relative flex items-center h-[21px] border-b border-[#383838]">
          <div class="w-[20px] h-full flex items-center justify-center border-r border-[#383838]"><svg width="13" height="9" viewBox="0 0 13 9"><path d="M.5 4.500C3 1 10 1 12.500 4.500 10 8 3 8 .5 4.500z" fill="#999" stroke="#ccc"/><circle cx="6.500" cy="4.500" r="2" fill="#444"/></svg></div>
          <div class="w-[21px] h-full border-r border-[#383838]"></div>
          <div class="w-[4px] h-[18px] ml-px bg-[#4f7fff]"></div>
          <div class="w-px h-full ml-px bg-[#383838]"></div>
          <svg class="ml-[5px]" width="6" height="8" viewBox="0 0 6 8"><path d="M0 0l6 4-6 4z" fill="#ddd"/></svg>
          <div class="ml-[10px] w-[18px] h-[18px] flex items-center justify-center bg-white border border-black"><svg width="16" height="5" viewBox="0 0 16 5"><circle cx="2" cy="2.500" r="1.500" fill="#f7931e"/><rect x="5" y="1" width="2.500" height="3" fill="#dcc62a"/><rect x="8.500" y=".5" width="3" height="4" fill="#c1272d"/><rect x="13" y="1" width="3" height="3" fill="#0071bc"/></svg></div>
          <span class="ml-[5px] w-[92px] text-[#d8d8d8]">Layer 1</span>
          <div class="w-px h-full bg-[#383838]"></div>
          <div class="ml-[4px] w-[9px] h-[9px] rounded-full border border-[#bbb]"></div>
          <div class="ml-[5px] w-[8px] h-[8px] bg-[#4f7fff] border border-black"></div>
          <svg class="absolute right-0 top-0" width="6" height="6"><path d="M0 0h6v6z" fill="#e0e0e0"/></svg>
        </div>
      </div>
      <div class="flex items-center h-[22px]">
        <span class="w-[82px]">1 Layer</span>
        <svg width="13" height="13" viewBox="0 0 13 13"><circle cx="8" cy="5" r="4" fill="none" stroke="#ccc"/><path d="M5 8l-4 4" stroke="#ccc" stroke-width="1.300"/></svg>
        <svg class="ml-[12px]" width="12" height="12" viewBox="0 0 12 12"><rect x=".5" y=".5" width="7" height="7" fill="#666" stroke="#777"/><rect x="4.500" y="4.500" width="7" height="7" fill="none" stroke="#777"/></svg>
        <svg class="ml-[14px]" width="14" height="9" viewBox="0 0 14 9"><path d="M4 0h10v9H6V5H0z" fill="#6f6f6f"/></svg>
        <svg class="ml-[13px] text-[#c8c8c8]" width="12" height="12"><use href="#new"/></svg>
        <svg class="ml-[13px]" width="12" height="13"><use href="#trash"/></svg>
      </div>
    </div>

    <!-- Align -->
    <div class="flex h-[17px] bg-[#363636] border-t border-[#262626] font-semibold">
      <div class="flex items-center w-[63px] pl-[7px] text-[#8f8f8f]">Transform</div>
      <div class="flex items-center w-[45px] pl-[4px] bg-[#484848] text-[#d8d8d8]"><svg class="mr-[2px]" width="5" height="9" viewBox="0 0 5 9"><path d="M2.500 0L5 3H0zM2.500 9L0 6h5z" fill="#ccc"/></svg>Align</div>
      <div class="flex items-center w-[65px] pl-[7px] text-[#8f8f8f] border-r border-[#2c2c2c]">Pathfinder</div>
      <svg class="ml-auto mr-[4px] self-center" width="15" height="9"><use href="#menu"/></svg>
    </div>
    <div class="h-[168px] bg-[#484848] px-[5px]">
      <div class="h-[25px] pt-[6px] leading-[14px]">Align Objects:</div>
      <div class="flex items-center h-[24px]">
        <svg class="ml-[4px]" width="16" height="16"><use href="#a-l"/></svg>
        <svg class="ml-[20px]" width="16" height="16"><use href="#a-hc"/></svg>
        <svg class="ml-[21px]" width="16" height="16"><use href="#a-r"/></svg>
        <div class="ml-[30px] w-[24px] h-[24px] flex items-center justify-center bg-[#3a3a3a] border border-[#2c2c2c]"><svg width="16" height="16"><use href="#a-t"/></svg></div>
        <svg class="ml-[16px]" width="16" height="16"><use href="#a-vc"/></svg>
        <svg class="ml-[20px]" width="16" height="16"><use href="#a-b"/></svg>
      </div>
      <div class="h-px mt-[6px] bg-[#383838]"></div>
      <div class="h-[26px] pt-[6px] leading-[14px]">Distribute Objects:</div>
      <div class="flex items-center h-[18px] mt-[2px]">
        <svg class="ml-[5px]" width="16" height="16"><use href="#d-t"/></svg>
        <svg class="ml-[20px]" width="16" height="16"><use href="#d-vc"/></svg>
        <svg class="ml-[20px]" width="16" height="16"><use href="#d-b"/></svg>
        <svg class="ml-[34px]" width="16" height="16"><use href="#d-l"/></svg>
        <svg class="ml-[20px]" width="16" height="16"><use href="#d-hc"/></svg>
        <svg class="ml-[20px]" width="16" height="16"><use href="#d-r"/></svg>
      </div>
      <div class="h-px mt-[9px] bg-[#383838]"></div>
      <div class="flex mt-[5px] h-[44px]">
        <div class="w-[158px] border-r border-[#383838]">
          <div class="h-[14px] leading-[14px]">Distribute Spacing:</div>
          <div class="flex items-center mt-[7px] h-[19px]">
            <svg class="ml-[5px]" width="16" height="16"><use href="#s-v"/></svg>
            <svg class="ml-[15px]" width="16" height="16"><use href="#s-h"/></svg>
            <div class="ml-[11px] flex h-[19px] border border-[#2c2c2c]">
              <div class="w-[15px] flex flex-col items-center justify-center gap-[3px] border-r border-[#2c2c2c] bg-[#555]"><svg width="7" height="4" opacity=".5"><use href="#up"/></svg><svg width="7" height="4" opacity=".5"><use href="#dd"/></svg></div>
              <div class="w-[55px] pl-[4px] bg-[#6e6e6e] text-[#bbb] leading-[17px]">0 px</div>
            </div>
          </div>
        </div>
        <div class="flex-1">
          <div class="h-[14px] leading-[14px] text-right pr-[1px]">Align To:</div>
          <div class="flex items-center mt-[7px] h-[19px] pl-[27px]">
            <svg width="14" height="14"><use href="#sel"/></svg>
            <svg class="ml-[2px]" width="8" height="5"><use href="#dd"/></svg>
          </div>
        </div>
      </div>
    </div>

    <!-- tooltip -->
    <div class="absolute left-[95px] top-[851px] w-[136px] h-[25px] pl-[5px] bg-white border border-[#777] text-[14.400px] leading-[22px] text-[#5b6878] whitespace-nowrap">Vertical Align Top</div>
  </aside>
</div>

<script>
  // fill the swatch rows from their colour lists
  document.querySelectorAll('[data-swatches]').forEach(row => {
    row.dataset.swatches.split(' ').forEach(colour => {
      const cell = document.createElement('div');
      cell.className = 'w-[14px] h-[14px] border-r border-b border-[#3a3a3a]';
      cell.style.backgroundColor = colour;
      row.appendChild(cell);
    });
  });
</script>
</body>
</html>
